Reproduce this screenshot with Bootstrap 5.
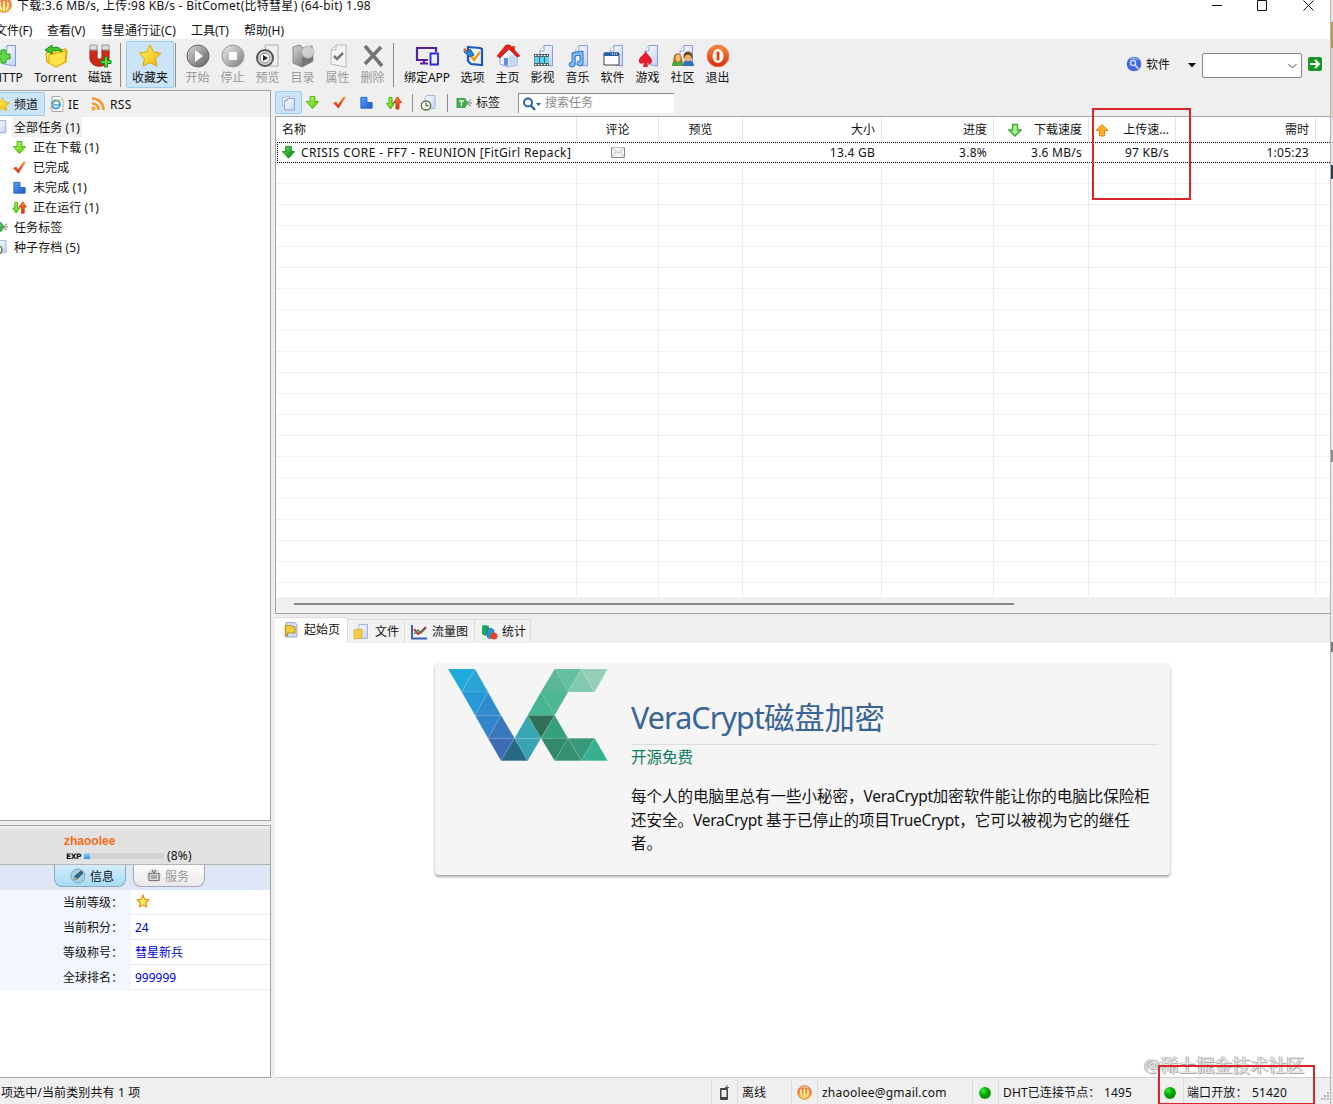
<!DOCTYPE html>
<html lang="zh-CN">
<head>
  <meta charset="UTF-8">
  <meta name="viewport" content="width=device-width, initial-scale=1">
  <title>BitComet</title>
  <link href="https://cdn.jsdelivr.net/npm/bootstrap@5.3.0/dist/css/bootstrap.min.css" rel="stylesheet">
  <style>
    body {
      width: 1333px;
      height: 1104px;
      font-family: "Noto Sans", "Noto Sans CJK SC", sans-serif;
      font-size: 12px;
      line-height: 16px;
      color: #111;
      background: #fff;
    }
    svg { display: block; flex: none; }
    .t { white-space: nowrap; }

    /* window frame */
    .app { width: 1331px; height: 1104px; background: #efefef; border-right: 1px solid #b4b4b4; }
    .desktop-edge {
      width: 2px;
      background: linear-gradient(#e8e4dc 22px, #b59d3d 22px 48px, #d8d4c8 48px 118px, #e4e4e4 118px 165px, #333a44 165px 179px, #ececec 179px 450px, #888 450px 462px, #ececec 462px 642px, #777 642px 652px, #ececec 652px);
    }
    .titlebar { height: 20px; background: #fff; }
    .titlebar .t { margin: -2px 0 0 5px; letter-spacing: .27px; }
    .menubar { height: 19px; }
    .menubar .t { width: 54px; margin-top: 3px; }

    /* main toolbar */
    .toolbar-main { height: 52px; }
    .tool { width: 35px; flex: none; padding-top: 5px; text-align: center; white-space: nowrap; }
    .tool svg { margin: 0 auto 2px; }
    .tool-off { color: #9a9a9a; }
    .tool-on { width: 48px; height: 47px; margin-top: 2px; padding-top: 2px; background: #cce4f7; border: 1px solid #99cdf5; border-radius: 2px; }
    .vline { width: 1px; height: 44px; margin-top: 4px; background: #8b8b8b; flex: none; }
    .address { width: 100px; height: 25px; margin-top: 14px; background: #fff; border: 1px solid #868686; border-radius: 2px; }

    /* left side */
    .side { width: 271px; flex: none; }
    .side-top { height: 731px; border: solid #a2a2a2; border-width: 1px 1px 1px 0; background: #fff; }
    .side-tabs { height: 26px; background: #f0f0f0; }
    .side-tabs .t, .tree-item .t { padding-top: 2px; }
    .side-tab-on { width: 45px; height: 24px; background: #cce4f7; border: 1px solid #99cdf5; border-left: 0; border-radius: 0 2px 2px 0; }
    .tree-item { height: 20px; letter-spacing: .1px; }
    .tree-child { padding-left: 12px; }
    .tree-child svg { margin-right: 6px; }
    .tree-item .tree-sel { background: #f0f0f0; padding: 1px 2px 0; margin-left: -2px; height: 20px; line-height: 19px; }

    /* user info */
    .user-box { height: 253px; margin-top: 4px; border: solid #a2a2a2; border-width: 1px 1px 1px 0; background: #fff; }
    .user-head { height: 39px; padding: 8px 0 0 64px; background: linear-gradient(#f4f4f4, #e2e2e2 4px); border-bottom: 1px solid #b5b5b5; }
    .user-name { font: bold 12px/14px "Liberation Sans", sans-serif; color: #fb6a17; }
    .exp-label { width: 20px; padding: 2px 0 0 2px; font: bold 7.5px/10px "DejaVu Sans", sans-serif; letter-spacing: -.4px; }
    .exp-bar { width: 80px; height: 6px; background: #d3d3d3; margin-right: 3px; }
    .exp-fill { height: 6px; background: linear-gradient(#9bd8ff, #2f8fe0); }
    .user-tabs { height: 25px; padding-left: 54px; background: #dfe6f5; }
    .user-tab { width: 72px; height: 22px; padding: 1px 0 0 15px; border: 1px solid #a6abb3; border-top: 0; border-radius: 0 0 8px 8px; background: linear-gradient(#fcfcfc, #e9e9e9); color: #999; }
    .user-tab-on { background: linear-gradient(#d5edfb, #a5dbf7); border-color: #88aabd; color: #111; margin-right: 7px; }
    .fact { height: 25px; line-height: 26px; }
    .fact-name { width: 131px; padding-left: 63px; background: #f2f6ff; white-space: nowrap; border-bottom: 1px solid #eef2fb; }
    .fact-value { padding-left: 4px; border-bottom: 1px solid #e8ebf1; color: #0000d8; }

    /* filter bar over the task list */
    .filterbar { height: 26px; padding-bottom: 1px; }
    .filter { width: 27px; height: 23px; }
    .filter-on { background: #cce4f7; border: 1px solid #99cdf5; border-radius: 2px; }
    .filter-sep { width: 1px; height: 18px; background: #8b8b8b; }
    .searchbox { width: 156px; height: 20px; background: #fff; border: solid #8b8b8b; border-width: 1px 0 0 1px; color: #8b8b8b; padding-left: 4px; }

    /* task list */
    .tasks { height: 498px; border: solid #a2a2a2; border-width: 1px 0 1px 1px; background: #fff; }
    .cell-row { height: 25px; }
    .cell-row > div { flex: none; height: 25px; padding: 5px 6px 0; border-right: 1px solid #e4e4e4; }
    .task-row { height: 21px; margin: 0 0 0 1px; border: 1px dotted #000; border-right: 0; }
    .task-row > div { border-right: 0; height: 19px; padding: 2px 7px 0 6px; letter-spacing: .25px; }
    .grid-lines { height: 434px; background: repeating-linear-gradient(#fff 0 20px, #f0f0f0 20px 21px); }
    .grid-lines > div { height: 434px; padding: 0; border-right: 1px solid #ececec; }
    .c1 { width: 301px; } .c2 { width: 82px; } .c3 { width: 84px; } .c4 { width: 139px; }
    .c5 { width: 112px; } .c6 { width: 95px; } .c7 { width: 87px; } .c8 { width: 140px; }
    .task-row .c1 { width: 299px; padding: 0 0 0 3px; letter-spacing: .4px; }
    .task-row .c1 span { margin-left: 5px; padding-top: 1px; }
    .task-row .c2 { padding-top: 0; }
    .hscroll { height: 16px; background: #f0f0f0; padding: 6px 0 0 18px; }
    .hscroll div { width: 720px; height: 2px; background: #858585; }

    /* detail tabs and start page */
    .detail-tabs { height: 29px; padding-top: 3px; }
    .dtab { height: 23px; margin-top: 2px; padding-top: 2px; border: 1px solid #dcdcdc; border-left: 0; border-bottom: 0; background: #f2f2f2; white-space: nowrap; }
    .dtab-on { height: 26px; margin-top: 0; padding-top: 0; padding-bottom: 1px; background: #fff; }
    .start-page { height: 435px; background: #fff; padding: 20px 0 0 160px; border-bottom: 1px solid #d0d0d0; }
    .ad-box { width: 735px; height: 212px; background: #f5f5f5; border-radius: 4px; box-shadow: 0 2px 3px rgba(0, 0, 0, .35); padding: 6px 12px 0 13px; }
    .ad-text { width: 527px; margin-left: 23px; }
    .ad-title { height: 76px; padding-top: 27px; font-size: 30.4px; line-height: 44px; color: #386498; border-bottom: 1px solid #dedede; letter-spacing: -.2px; }
    .ad-title span { letter-spacing: -.85px; }
    .ad-sub { font-size: 15.5px; line-height: 25px; color: #0d7a62; }
    .ad-body { font-size: 15.5px; line-height: 23.5px; padding-top: 15px; white-space: nowrap; }
    .ad-body span { letter-spacing: -.28px; }

    /* status bar */
    .status { height: 26px; }
    .status > div { height: 24px; margin-top: 1px; padding-top: 3px; border-right: 1px solid #dadada; flex: none; white-space: nowrap; letter-spacing: .12px; }

    .red-box { position: absolute; border: 2px solid #d8262c; }
    .watermark { position: absolute; left: 1144px; top: 1052px; font-size: 18px; line-height: 26px; color: #e4e4e4; white-space: nowrap; text-shadow: 1px 1px 0 #aaa, -1px 0 0 #b4b4b4; }
    .grip { position: absolute; left: 1320px; top: 1092px; }
  </style>
</head>
<body class="position-relative overflow-hidden">

  <!-- shared icons -->
  <svg width="0" height="0" class="position-absolute">
    <defs>
      <linearGradient id="gGreen" x2="1" y2="1"><stop stop-color="#c8ff5a"/><stop offset="1" stop-color="#4cc400"/></linearGradient>
      <linearGradient id="gDeep" x2="1" y2="1"><stop stop-color="#5fe05f"/><stop offset="1" stop-color="#067a06"/></linearGradient>
      <linearGradient id="gGold" x2="1" y2="1"><stop stop-color="#fff76a"/><stop offset="1" stop-color="#f0b400"/></linearGradient>
      <linearGradient id="gPage" x2="1" y2="1"><stop stop-color="#fff"/><stop offset="1" stop-color="#c4d2f6"/></linearGradient>
      <linearGradient id="gGray" x2="1" y2="1"><stop stop-color="#d8d8d8"/><stop offset="1" stop-color="#5c5c5c"/></linearGradient>
      <linearGradient id="gStop" x2="1" y2="1"><stop stop-color="#ececec"/><stop offset="1" stop-color="#7c7c7c"/></linearGradient>
      <linearGradient id="gBlue" x2="1" y2="1"><stop stop-color="#5aa0ff"/><stop offset="1" stop-color="#1858c8"/></linearGradient>
      <linearGradient id="gRed" x2="0" y2="1"><stop stop-color="#ff8a3c"/><stop offset="1" stop-color="#d82810"/></linearGradient>
      <linearGradient id="gComet" x2="0" y2="1"><stop stop-color="#e8683c"/><stop offset=".6" stop-color="#f79a28"/><stop offset="1" stop-color="#ffd23c"/></linearGradient>
      <radialGradient id="gDot" cx=".35" cy=".3"><stop stop-color="#3cf03c"/><stop offset=".6" stop-color="#08b808"/><stop offset="1" stop-color="#059505"/></radialGradient>
    </defs>
    <symbol id="star" viewBox="0 0 24 24"><path d="M12 1l3.400 7 7.600 1.300-5.600 5.200 1.600 7.800-7-3.800-7 3.600 1.400-7.600L1 9l7.700-1z" fill="url(#gGold)" stroke="#d9a400"/></symbol>
    <symbol id="down" viewBox="0 0 16 16"><path d="M5.500 1.500h5v5.500h4L8 14.500 1.500 7h4z" fill="url(#gGreen)" stroke="#3fae10"/></symbol>
    <symbol id="downDeep" viewBox="0 0 16 16"><path d="M5 1.500h6v5.500h3.500L8 14 1.500 7H5z" fill="url(#gDeep)" stroke="#189018"/></symbol>
    <symbol id="check" viewBox="0 0 16 16"><path d="M1 8.500l3.500-1.500 2 3L12 2l3-.5-8 13z" fill="url(#gRed)"/></symbol>
    <symbol id="part" viewBox="0 0 16 16"><path d="M2 2.500h6.500v5.500H14v6H2z" fill="url(#gBlue)" stroke="#2664d0"/></symbol>
    <symbol id="updown" viewBox="0 0 16 16"><path d="M3 2.500h3v6h2.200L4.500 14 .7 8.500H3z" fill="url(#gGreen)" stroke="#3fae10"/><path d="M10 14V7.500H7.600L11.500 2l3.900 5.500H13V14z" fill="url(#gRed)" stroke="#d84010"/></symbol>
    <symbol id="page" viewBox="0 0 16 16"><path d="M5 .5h8.500v14H2.500V3z" fill="url(#gPage)" stroke="#91a6dc"/><path d="M5 .5V3H2.500" fill="none" stroke="#91a6dc"/></symbol>
    <symbol id="pages" viewBox="0 0 16 16"><path d="M1.500 2.500h3v-1h4v9h-7z" fill="#fff" stroke="#a5b5df"/><path d="M6 3.500h7.500v11.500H3.500V6z" fill="url(#gPage)" stroke="#8fa4da"/><path d="M6 3.500V6H3.500" fill="none" stroke="#8fa4da"/></symbol>
    <symbol id="clockPage" viewBox="0 0 16 16"><path d="M7 .5h8v13H5V3z" fill="url(#gPage)" stroke="#a3b4df"/><circle cx="6" cy="10.500" r="4.600" fill="#f4fff0" stroke="#5c7a50" stroke-width="1.500"/><path d="M6 7.500v3.300h2.500" fill="none" stroke="#333"/></symbol>
    <symbol id="tag" viewBox="0 0 17 12"><path d="M.5 1h8.500L12 6 9 11H.5z" fill="#43ab50"/><path d="M3 4h5M5.500 4v5" stroke="#e5ffe5" stroke-width="1.300"/><path d="M11 6l4-3.500M11 6h5M11.500 7l3.500 2" stroke="#777" fill="none"/></symbol>
    <symbol id="blankPage" viewBox="0 0 24 24"><path d="M13 1.500h8.500v20.500L9 20V7z" fill="url(#gPage)" stroke="#8a9cd5"/><path d="M13 1.500V7H9" fill="#fff" stroke="#8a9cd5"/></symbol>
    <symbol id="comet" viewBox="0 0 16 16"><circle cx="8" cy="8" r="7.300" fill="url(#gComet)" stroke="#dd6a28" stroke-width=".8"/><path d="M4.300 5.500c-.6 2-.2 4.500 1 6.500M8 4.500v8.500M11.700 5.500c.6 2 .2 4.500-1 6.500" fill="none" stroke="#fff3c8" stroke-width="1.700" stroke-linecap="round"/><path d="M4 3.500c2-2 6-2 8 0" fill="none" stroke="#ffcfae" stroke-width="1.200"/></symbol>
    <symbol id="dot" viewBox="0 0 12 12"><circle cx="6" cy="6" r="5.900" fill="url(#gDot)"/></symbol>
  </svg>

  <div class="d-flex">
    <div class="app d-flex flex-column">

      <div class="titlebar d-flex justify-content-between">
        <div class="d-flex">
          <svg width="16" height="16" style="margin:-3px 0 0 -4px"><use href="#comet"/></svg>
          <div class="t">下载:3.6 MB/s, 上传:98 KB/s - BitComet(比特彗星) (64-bit) 1.98</div>
        </div>
        <svg width="118" height="14" fill="none" stroke="#111"><path d="M0 5.500h10M45.500.500h9v10h-9zM91.500.500l10 10M101.500.500l-10 10"/></svg>
      </div>

      <div class="menubar d-flex bg-white">
        <div class="t" style="width:47px;margin-left:-5px;margin-right:5px">文件(F)</div>
        <div class="t">查看(V)</div>
        <div class="t" style="width:90px">彗星通行证(C)</div>
        <div class="t" style="width:53px">工具(T)</div>
        <div class="t">帮助(H)</div>
      </div>

      <div class="toolbar-main d-flex">
        <div class="tool" style="width:44px;margin-left:-14px">
          <svg width="24" height="24" viewBox="0 0 24 24"><use href="#blankPage" x="-2"/><path d="M5 6h5v4h4v5h-4v4H5v-4H1v-5h4z" fill="#63d94a" stroke="#239c17"/></svg>HTTP
        </div>
        <div class="tool" style="width:51px;letter-spacing:.2px">
          <svg width="24" height="24" viewBox="0 0 24 24"><path d="M2 9l3-1 4 1 5-3 8-1 1 3-1 10-10 5-9-5z" fill="url(#gGold)" stroke="#cf9c00"/><path d="M5 11l17-4-1 11-9 5-7-4z" fill="#ffe348" stroke="#dfae0c"/><path d="M1 6l7-5v3c6-2 9 0 10 4-3-2-6-2-10-1v3z" fill="#3fc82a" stroke="#1c8e12"/></svg>Torrent
        </div>
        <div class="tool" style="width:38px">
          <svg width="24" height="24" viewBox="0 0 24 24"><path d="M2 5h7v8c0 3 5 3 5 0V5h7v9c0 11-19 11-19 0z" fill="#cf2b14" stroke="#9c1b08"/><path d="M2 1h7v5H2zM14 1h7v5h-7z" fill="#ddd" stroke="#999"/><path d="M16.500 13h3v3.500H23v3h-3.500V23h-3v-3.500H13v-3h3.500z" fill="#55d840" stroke="#198a13"/></svg>磁链
        </div>
        <div class="vline" style="margin-left:1px;margin-right:5px"></div>
        <div class="tool tool-on"><svg width="26" height="24"><use href="#star"/></svg>收藏夹</div>
        <div class="vline" style="margin-left:1px;margin-right:4px"></div>
        <div class="tool tool-off"><svg width="24" height="24" viewBox="0 0 24 24"><circle cx="12" cy="12" r="11" fill="url(#gGray)" stroke="#666"/><path d="M9 6l8 6-8 6z" fill="#fff"/></svg>开始</div>
        <div class="tool tool-off"><svg width="24" height="24" viewBox="0 0 24 24"><circle cx="12" cy="12" r="11" fill="url(#gStop)" stroke="#999"/><path d="M8 8h8v8H8z" fill="#fff"/></svg>停止</div>
        <div class="tool tool-off"><svg width="24" height="24" viewBox="0 0 24 24"><path d="M9 1h13v21H12z" fill="#eee" stroke="#b0b0b0"/><circle cx="9" cy="14" r="8" fill="#ddd" stroke="#555" stroke-width="2"/><circle cx="9" cy="14" r="5" fill="#fff" stroke="#777"/><path d="M7 11l5 3-5 3z" fill="#222"/></svg>预览</div>
        <div class="tool tool-off"><svg width="24" height="24" viewBox="0 0 24 24"><path d="M2 3l7-2 3 3 9-2 1 15-11 6-9-4z" fill="url(#gGray)" stroke="#888"/><path d="M11 13l12-4-2 9-10 5z" fill="#777"/><circle cx="17" cy="8" r="6" fill="#ddd" fill-opacity=".8" stroke="#bbb"/></svg>目录</div>
        <div class="tool tool-off"><svg width="24" height="24" viewBox="0 0 24 24"><path d="M10 1h10v22L5 20V6z" fill="#f5f5f5" stroke="#b9b9b9"/><path d="M10 1v5H5" fill="none" stroke="#b9b9b9"/><path d="M8 12l3 3 6-6" fill="none" stroke="#777" stroke-width="2.500"/></svg>属性</div>
        <div class="tool tool-off"><svg width="24" height="24" viewBox="0 0 24 24"><path d="M4 2l17 20M20 3L4 20" stroke="#747474" stroke-width="3.500"/></svg>删除</div>
        <div class="vline" style="margin-left:3px;margin-right:5px"></div>
        <div class="tool" style="width:56px">
          <svg width="24" height="24" viewBox="0 0 24 24" fill="none"><path d="M13 16H2V4h19v4" stroke="#54209c" stroke-width="2.200"/><path d="M9 16v3M5 19.500h8" stroke="#54209c" stroke-width="2"/><path d="M15.500 9.500h7.500v11h-7.500z" fill="#f0f0ff" stroke="#2823e8" stroke-width="1.800"/></svg>绑定APP
        </div>
        <div class="tool"><svg width="24" height="24" viewBox="0 0 24 24"><path d="M7 3l12 1 2 1v16l-11-1-3-3z" fill="#e9f4ff" stroke="#1d58b8" stroke-width="2.200"/><path d="M10 12l3 4 6-8" fill="none" stroke="#f39a16" stroke-width="2.500"/><path d="M4 6l5 2V5l4 6-6 2V11L3 8z" fill="#3188df" stroke="#15519c"/><circle cx="4" cy="6" r="1.700" fill="#e36a2a"/></svg>选项</div>
        <div class="tool"><svg width="24" height="24" viewBox="0 0 24 24"><path d="M4 11l8-7 9 7v10l-9 2-8-3z" fill="#eef3ff" stroke="#8ba3d4"/><path d="M13 12l8-3v12l-8 2z" fill="#c7d8f5"/><path d="M16 2h3v6h-3z" fill="#d0532a"/><path d="M1 12L10 1l4 0 10 11-3 1-8-8-9 9z" fill="#e3221b" stroke="#ad130c" stroke-width=".6"/><path d="M8 14h4v8l-4-1z" fill="#5d91dd"/></svg>主页</div>
        <div class="tool"><svg width="24" height="24" viewBox="0 0 24 24"><use href="#blankPage"/><path d="M3 10h15v12H3z" fill="#54656c"/><path d="M3.500 13H8v6H3.500zM9 13h4v6H9zM14 13h4v6h-4z" fill="#5cd3ee"/><path d="M4 11.500h13M4 20.500h13" stroke="#fff" stroke-dasharray="1.500 1.500"/></svg>影视</div>
        <div class="tool"><svg width="24" height="24" viewBox="0 0 24 24"><use href="#blankPage"/><path d="M6 9l11-2v12a3 2.500 0 1 1-3-2v-6l-5 1v8a3 2.500 0 1 1-3-2z" fill="#7cbcf6" stroke="#2f6fbe"/></svg>音乐</div>
        <div class="tool"><svg width="24" height="24" viewBox="0 0 24 24"><use href="#blankPage"/><path d="M3 9h15v12H3z" fill="#f8fbff" stroke="#444"/><path d="M3 8.500h15V12H3z" fill="#2962a6"/><path d="M11 10h6" stroke="#fff" stroke-dasharray="1 1"/></svg>软件</div>
        <div class="tool"><svg width="24" height="24" viewBox="0 0 24 24"><use href="#blankPage"/><path d="M10 7c1 4 6 6 6 10 0 3-3 4-5 2l1 4H7l1-4c-3 2-6 0-5-3 0-3 5-5 7-9z" fill="#e61c2a"/></svg>游戏</div>
        <div class="tool"><svg width="24" height="24" viewBox="0 0 24 24"><use href="#blankPage"/><path d="M1 22c0-5 2-6 6-6s5 2 6 6z" fill="#55a437"/><path d="M12 22c0-5 2-6 5-6s6 2 6 6z" fill="#316fc1"/><path d="M2.500 18c-1-12 9-11 9 0z" fill="#a96819"/><ellipse cx="7" cy="14" rx="2.700" ry="3.500" fill="#f5bd6c"/><circle cx="17" cy="12" r="4.500" fill="#70451c"/><circle cx="17" cy="14" r="3.300" fill="#eeb26a"/></svg>社区</div>
        <div class="tool"><svg width="24" height="24" viewBox="0 0 24 24"><circle cx="12" cy="12" r="10.800" fill="url(#gRed)" stroke="#e3703c"/><ellipse cx="12" cy="12" rx="5.500" ry="7" fill="#fff"/><rect x="10.500" y="7.500" width="3" height="9" rx="1" fill="#e04817"/></svg>退出</div>

        <div class="d-flex ms-auto">
          <svg width="16" height="16" viewBox="0 0 16 16" style="margin:17px 4px 0 0"><circle cx="8" cy="8" r="7.300" fill="#4267df"/><path d="M3 3c3-3 8-2 10 1z" fill="#8ca9f4"/><circle cx="7" cy="7" r="2.500" fill="none" stroke="#c9d8ff" stroke-width="1.500"/><path d="M9 9l3.500 4" stroke="#c9d8ff" stroke-width="1.800"/></svg>
          <div class="t" style="width:42px;padding-top:18px">软件</div>
          <svg width="8" height="5" style="margin:24px 6px 0 0"><path d="M0 0h8L4 4.500z" fill="#111"/></svg>
          <div class="address d-flex justify-content-end"><svg width="14" height="8" style="margin-top:9px" fill="none" stroke="#555"><path d="M1.500 1l4 4 4-4"/></svg></div>
          <svg width="14" height="14" viewBox="0 0 14 14" style="margin:18px 8px 0 6px"><rect width="14" height="14" rx="2" fill="#159324"/><path d="M2 7h8M7 3l4 4-4 4" stroke="#fff" stroke-width="2" fill="none"/></svg>
        </div>
      </div>

      <div class="d-flex">
        <div class="side">
          <div class="side-top">
            <div class="side-tabs d-flex align-items-center">
              <div class="side-tab-on d-flex align-items-center">
                <svg width="15" height="15" style="margin-left:-5px"><use href="#star"/></svg>
                <div class="t" style="margin-left:4px">频道</div>
              </div>
              <svg width="15" height="16" viewBox="0 0 15 16" style="margin:0 4px 0 4px"><path d="M3 .500h8l3 3v12H3z" fill="#fff" stroke="#aaa"/><circle cx="7" cy="8.500" r="4" fill="none" stroke="#37a3df" stroke-width="2"/><path d="M3.500 9h7.500" stroke="#37a3df" stroke-width="1.500"/><path d="M1 13C4 6 9 3 13 4" fill="none" stroke="#e7b735"/></svg>
              <div class="t" style="width:23px;letter-spacing:.3px">IE</div>
              <svg width="14" height="14" viewBox="0 0 14 14" style="margin-right:5px" fill="none" stroke="#f39a2c" stroke-width="2.600"><path d="M1 1.500c7 0 11.500 5 11.500 11.500M1 6.500C5 6.500 7.500 9 7.500 13"/><circle cx="2.500" cy="11.500" r=".8"/></svg>
              <div class="t" style="letter-spacing:.4px">RSS</div>
            </div>
            <div class="tree-item d-flex align-items-center"><svg width="14" height="14" style="margin-left:-6px;margin-right:6px"><use href="#page"/></svg><div class="t tree-sel">全部任务 (1)</div></div>
            <div class="tree-item tree-child d-flex align-items-center"><svg width="15" height="15"><use href="#down"/></svg><div class="t">正在下载 (1)</div></div>
            <div class="tree-item tree-child d-flex align-items-center"><svg width="15" height="15"><use href="#check"/></svg><div class="t">已完成</div></div>
            <div class="tree-item tree-child d-flex align-items-center"><svg width="15" height="15"><use href="#part"/></svg><div class="t">未完成 (1)</div></div>
            <div class="tree-item tree-child d-flex align-items-center"><svg width="15" height="15"><use href="#updown"/></svg><div class="t">正在运行 (1)</div></div>
            <div class="tree-item d-flex align-items-center"><svg width="16" height="12" style="margin-left:-7px;margin-right:5px"><use href="#tag"/></svg><div class="t">任务标签</div></div>
            <div class="tree-item d-flex align-items-center"><svg width="15" height="15" style="margin-left:-8px;margin-right:7px"><use href="#clockPage"/></svg><div class="t">种子存档 (5)</div></div>
          </div>

          <div class="user-box">
            <div class="user-head">
              <div class="user-name">zhaoolee</div>
              <div class="d-flex align-items-center">
                <div class="exp-label">EXP</div>
                <div class="exp-bar"><div class="exp-fill" style="width:8%"></div></div>
                <div class="t" style="letter-spacing:.2px">(8%)</div>
              </div>
            </div>
            <div class="user-tabs d-flex">
              <div class="user-tab user-tab-on d-flex align-items-center">
                <svg width="16" height="16" viewBox="0 0 16 16" class="me-1"><circle cx="8" cy="8" r="7" fill="#a6cfe2" stroke="#7ba9c0"/><path d="M4 12l1-4 6-5 2 2-6 6z" fill="#277095" stroke="#333" stroke-width=".7"/><path d="M4 12l1-3 2 2z" fill="#f1d283"/></svg><span class="t" style="padding-top:1px">信息</span>
              </div>
              <div class="user-tab d-flex align-items-center" style="padding-left:12px">
                <svg width="16" height="16" viewBox="0 0 16 16" class="me-1"><circle cx="8" cy="8" r="7" fill="#ddd"/><path d="M3 5.500h10v7H3zM5 8h6M5 10h6M6 2l2 3 2-3" fill="none" stroke="#777" stroke-width="1.200"/></svg><span class="t" style="margin-left:-1px;padding-top:1px">服务</span>
              </div>
            </div>
            <div class="fact d-flex"><div class="fact-name">当前等级：</div><div class="fact-value flex-grow-1"><svg width="14" height="14" style="margin:4px 0 0 1px" viewBox="0 0 24 24"><path d="M12 2l3 7 7 1-5 5 1 7-6-3-6 3 1-7-5-5 7-1z" fill="#ffed55" stroke="#e48a13" stroke-width="2"/></svg></div></div>
            <div class="fact d-flex"><div class="fact-name">当前积分：</div><div class="fact-value flex-grow-1">24</div></div>
            <div class="fact d-flex"><div class="fact-name">等级称号：</div><div class="fact-value flex-grow-1">彗星新兵</div></div>
            <div class="fact d-flex"><div class="fact-name">全球排名：</div><div class="fact-value flex-grow-1">999999</div></div>
          </div>
        </div>

        <div class="flex-grow-1" style="padding-left:4px">
          <div class="filterbar d-flex align-items-center">
            <div class="filter filter-on d-flex align-items-center justify-content-center"><svg width="16" height="16"><use href="#pages"/></svg></div>
            <div class="filter d-flex align-items-center justify-content-center" style="width:21px"><svg width="15" height="15"><use href="#down"/></svg></div>
            <div class="filter d-flex align-items-center justify-content-center" style="width:33px"><svg width="15" height="15"><use href="#check"/></svg></div>
            <div class="filter d-flex align-items-center justify-content-center" style="width:21px"><svg width="15" height="15"><use href="#part"/></svg></div>
            <div class="filter d-flex align-items-center justify-content-center" style="width:33px"><svg width="16" height="16"><use href="#updown"/></svg></div>
            <div class="filter-sep" style="margin-left:2px"></div>
            <svg width="16" height="16" style="margin:0 10px 0 7px"><use href="#clockPage"/></svg>
            <div class="filter-sep" style="margin-left:1px"></div>
            <svg width="17" height="12" style="margin:0 3px 0 8px"><use href="#tag"/></svg>
            <div class="t" style="width:42px;padding-top:1px">标签</div>
            <div class="searchbox d-flex align-items-center">
              <svg width="18" height="14" viewBox="0 0 18 14" style="margin:2px 4px 0 0"><circle cx="5" cy="5.500" r="4" fill="#fff" stroke="#2b62a9" stroke-width="2"/><path d="M8 8.500l4 4.500" stroke="#2b62a9" stroke-width="2.300"/><path d="M13 6h5l-2.500 3z" fill="#245c9c"/></svg><span class="t">搜索任务</span>
            </div>
          </div>

          <div class="tasks">
            <div class="cell-row d-flex">
              <div class="c1 t">名称</div>
              <div class="c2 t text-center">评论</div>
              <div class="c3 t text-center">预览</div>
              <div class="c4 t text-end">大小</div>
              <div class="c5 t text-end">进度</div>
              <div class="c6 t d-flex justify-content-between" style="padding-left:14px"><svg width="14" height="16" viewBox="0 0 14 16"><path d="M4.500 2.500h5v5.500h3.500L7 14 1 8h3.500z" fill="#b1f08c" stroke="#35aa35" stroke-width="1.300"/></svg>下载速度</div>
              <div class="c7 t d-flex justify-content-between"><svg width="14" height="16" viewBox="0 0 14 16"><path d="M4.500 14h5V8.500h3.500L7 2.500 1 8.500h3.500z" fill="#ffae22" stroke="#e57e12"/></svg>上传速...</div>
              <div class="c8 t text-end">需时</div>
            </div>
            <div class="cell-row task-row d-flex">
              <div class="c1 t d-flex align-items-center"><svg width="15" height="15"><use href="#downDeep"/></svg><span>CRISIS CORE - FF7 - REUNION [FitGirl Repack]</span></div>
              <div class="c2 d-flex align-items-center justify-content-center"><svg width="14" height="11" viewBox="0 0 14 11" fill="#f4f4f4" stroke="#888"><path d="M.500.500h13v10H.500z"/><path d="M.500.500L7 6l6.500-5.500M.500 10l4.500-5M13.500 10L9 5" stroke="#bbb"/></svg></div>
              <div class="c3"></div>
              <div class="c4 t text-end">13.4 GB</div>
              <div class="c5 t text-end">3.8%</div>
              <div class="c6 t text-end">3.6 MB/s</div>
              <div class="c7 t text-end">97 KB/s</div>
              <div class="c8 t text-end">1:05:23</div>
            </div>
            <div class="cell-row grid-lines d-flex">
              <div class="c1"></div><div class="c2"></div><div class="c3"></div><div class="c4"></div>
              <div class="c5"></div><div class="c6"></div><div class="c7"></div><div class="c8"></div>
            </div>
            <div class="hscroll"><div></div></div>
          </div>

          <div class="detail-tabs d-flex">
            <div class="dtab dtab-on d-flex align-items-center" style="width:73px;padding-left:8px">
              <svg width="15" height="16" viewBox="0 0 15 16" style="margin-right:6px"><path d="M3 .500h9l2 2v12.500H2z" fill="#d5def6" stroke="#98a7d2"/><path d="M2 4c3-1 3 0 5-.5l5 1.500v6c-3 1-3-1-6 0H4.500v3H3z" fill="#f3cb37" stroke="#a47b0d" stroke-width=".8"/></svg>起始页
            </div>
            <div class="dtab d-flex align-items-center" style="width:57px;padding-left:5px">
              <svg width="16" height="16" viewBox="0 0 16 16" style="margin-right:6px"><path d="M6 .500h8.500v14H5z" fill="url(#gPage)" stroke="#a3b4df"/><path d="M1 6l3-1 1 1 4-1v9l-8 1z" fill="#f6ca4a" stroke="#d7a11b" stroke-width=".7"/></svg>文件
            </div>
            <div class="dtab d-flex align-items-center" style="width:70px;padding-left:6px">
              <svg width="16" height="16" viewBox="0 0 16 16" style="margin-right:5px" fill="none"><path d="M1 1v13.500h15" stroke="#3b5fb8" stroke-width="2"/><path d="M3 5l4 5 3-2 5-5" stroke="#d51c3c" stroke-width="2"/><path d="M3 10l4-4 3 3 5-5" stroke="#3d8742" stroke-width="1.300"/></svg>流量图
            </div>
            <div class="dtab d-flex align-items-center" style="width:56px;padding-left:6px">
              <svg width="17" height="16" viewBox="0 0 17 16" style="margin-right:4px"><path d="M1 2l3-1 4 1v8l-4 2-3-2z" fill="#17a757"/><path d="M6 5l4-1 3 2v7l-4 2-3-2z" fill="#338bd0" stroke="#1b5f9f" stroke-width=".5"/><circle cx="13" cy="12" r="3.500" fill="#e54425"/></svg>统计
            </div>
          </div>

          <div class="start-page">
            <div class="ad-box d-flex">
              <svg width="160" height="92" viewBox="54 57 480 276" stroke="#ffffff" stroke-opacity=".25" stroke-width="1.200">
                <path fill="#20aada" d="M54 57h81L95 126z"/><path fill="#2aa2d8" d="M135 57l39 69H95z"/>
                <path fill="#2799d5" d="M95 126h79l-39 70z"/><path fill="#2e8bcd" d="M174 126l39 70h-78z"/>
                <path fill="#3085cb" d="M135 196h78l-39 69z"/><path fill="#3978bc" d="M213 196l41 69h-80z"/>
                <path fill="#406bb5" d="M174 265h80l-41 67z"/><path fill="#256a82" d="M254 265l39 67h-80z"/>
                <path fill="#39a3b4" d="M254 265h79l-40 67z"/><path fill="#3ba6b3" d="M293 196l40 69h-79z"/>
                <path fill="#2f6f55" d="M293 196h81l-41 69z"/><path fill="#389f7c" d="M374 196l40 69h-81z"/>
                <path fill="#338a6b" d="M333 265h81l-40 67z"/><path fill="#359071" d="M414 265l40 67h-80z"/>
                <path fill="#37997a" d="M414 265h80l-40 67z"/><path fill="#36b08e" d="M494 265l39 67h-79z"/>
                <g stroke="none">
                  <path fill="#45b594" d="M333 126l41 70h-81z"/><path fill="#4eb694" d="M333 126h81l-40 70z"/>
                  <path fill="#59b696" d="M374 57l40 69h-81z"/><path fill="#64c09f" d="M374 57h80l-40 69z"/>
                </g>
                <path fill="#82caaf" d="M454 57l40 69h-80z"/><path fill="#95cfb8" d="M454 57h79l-39 69z"/>
              </svg>
              <div class="ad-text">
                <div class="ad-title t"><span>VeraCrypt</span>磁盘加密</div>
                <div class="ad-sub">开源免费</div>
                <div class="ad-body">每个人的电脑里总有一些小秘密，<span>VeraCrypt</span>加密软件能让你的电脑比保险柜<br>还安全。<span>VeraCrypt </span>基于已停止的项目<span>TrueCrypt</span>，它可以被视为它的继任<br>者。</div>
              </div>
            </div>
          </div>
        </div>
      </div>

      <div class="status d-flex">
        <div class="d-flex align-items-center" style="width:712px;padding-left:1px">项选中/当前类别共有 1 项</div>
        <div class="d-flex align-items-center justify-content-center" style="width:26px"><svg width="11" height="16" viewBox="0 0 11 16"><rect x="1" y="3" width="8" height="12" rx="1" fill="#444"/><path d="M2.500 5h5v7h-5z" fill="#eee"/><path d="M8 0v5M6 2.500h4" stroke="#555"/></svg></div>
        <div class="d-flex align-items-center" style="width:54px;padding-left:4px">离线</div>
        <div class="d-flex align-items-center" style="width:26px;padding-left:5px"><svg width="15" height="15"><use href="#comet"/></svg></div>
        <div class="d-flex align-items-center" style="width:155px;padding-left:4px;letter-spacing:.22px">zhaoolee@gmail.com</div>
        <div class="d-flex align-items-center" style="width:26px;padding-left:6px"><svg width="12" height="12"><use href="#dot"/></svg></div>
        <div class="d-flex align-items-center" style="width:159px;padding-left:4px"><span style="width:101px">DHT已连接节点：</span>1495</div>
        <div class="d-flex align-items-center" style="width:26px;padding-left:6px"><svg width="12" height="12"><use href="#dot"/></svg></div>
        <div class="d-flex align-items-center border-0" style="padding-left:3px"><span style="width:65px">端口开放：</span>51420</div>
      </div>
    </div>
    <div class="desktop-edge"></div>
  </div>

  <div class="watermark">@稀土掘金技术社区</div>
  <svg class="grip" width="12" height="12" fill="#b5b5b5"><path d="M7 0h2v2H7zM4 3h2v2H4zM7 3h2v2H7zM1 6h2v2H1zM4 6h2v2H4zM7 6h2v2H7z"/></svg>
  <div class="red-box" style="left:1092px;top:108px;width:99px;height:92px"></div>
  <div class="red-box" style="left:1158px;top:1065px;width:157px;height:40px"></div>

  <script src="https://cdn.jsdelivr.net/npm/bootstrap@5.3.0/dist/js/bootstrap.bundle.min.js"></script>
</body>
</html>
